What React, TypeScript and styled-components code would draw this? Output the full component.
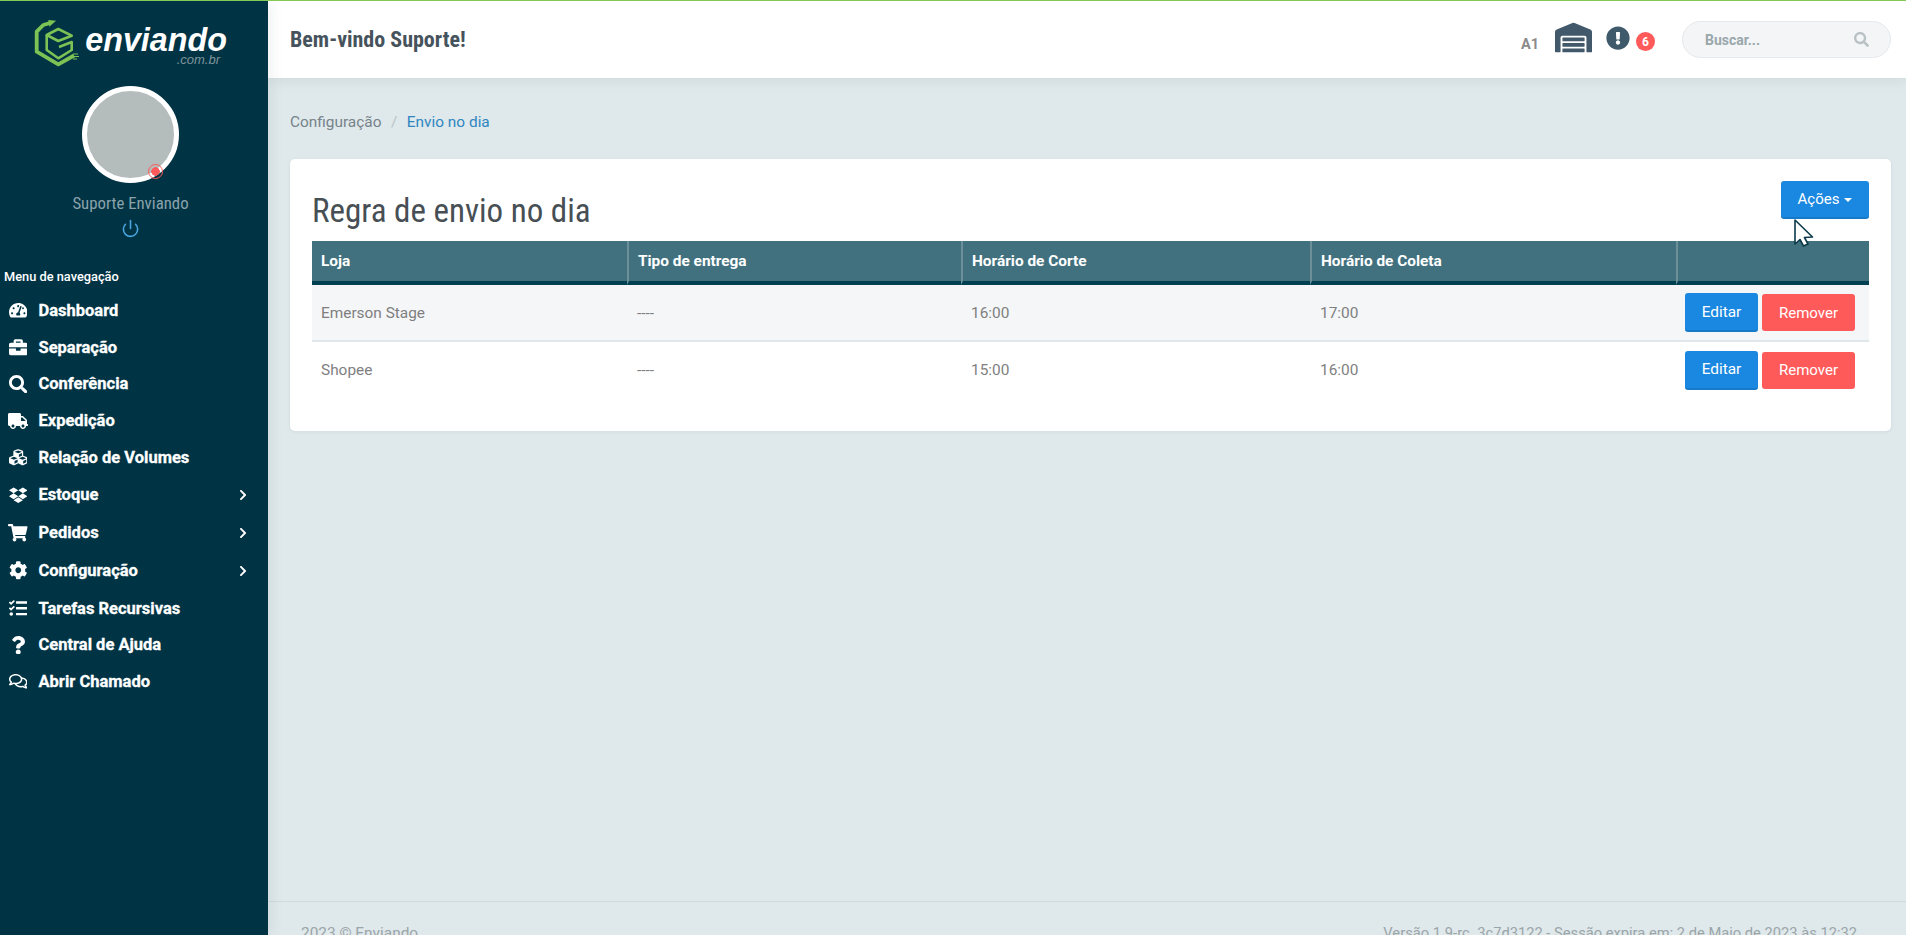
import * as React from "react";
import styled, { createGlobalStyle } from "styled-components";
import {
  FaTachometerAlt,
  FaBriefcase,
  FaSearch,
  FaTruck,
  FaCubes,
  FaDropbox,
  FaShoppingCart,
  FaCog,
  FaTasks,
  FaQuestion,
  FaRegComments,
  FaChevronRight,
  FaWarehouse,
  FaExclamationCircle,
} from "react-icons/fa";
import { Power } from "lucide-react";

const GlobalStyle = createGlobalStyle`
  html, body {
    margin: 0;
    padding: 0;
    height: 100%;
    overflow: hidden;
    background: #dfe8ea;
    font-family: Roboto, "Liberation Sans", sans-serif;
  }
  * { box-sizing: border-box; }
`;

const Page = styled.div`
  display: flex;
  height: 935px;
  overflow: hidden;
  border-top: 1px solid #82c955;
`;

const Sidebar = styled.aside`
  flex: 0 0 268px;
  background: #003445;
  display: flex;
  flex-direction: column;
  box-shadow: 2px 0 14px rgba(0, 50, 66, 0.08);
  z-index: 2;
`;

const LogoRow = styled.div`
  display: flex;
  align-items: flex-start;
  height: 70px;
  padding: 18px 0 0 33px;
  gap: 6px;
`;

const LogoText = styled.div`
  display: flex;
  flex-direction: column;
  align-items: flex-end;
  width: 142px;
`;

const LogoName = styled.span`
  font-family: "Liberation Sans", Arial, sans-serif;
  font-style: italic;
  font-weight: 700;
  font-size: 32.3px;
  line-height: 26px;
  margin-top: 8px;
  color: #fff;
`;

const LogoSuffix = styled.span`
  font-family: "Liberation Sans", Arial, sans-serif;
  font-style: italic;
  font-size: 13px;
  line-height: 13px;
  margin-right: 7px;
  color: #7f939b;
`;

const Profile = styled.div`
  display: flex;
  flex-direction: column;
  align-items: center;
  margin-top: 15px;
  padding-right: 7px;
`;

const Avatar = styled.div`
  position: relative;
  width: 97px;
  height: 97px;
  border-radius: 50%;
  border: 5px solid #fff;
  background: #b4bcbc;
`;

const StatusDot = styled.span`
  position: absolute;
  right: 11px;
  bottom: -1px;
  width: 15px;
  height: 15px;
  border-radius: 50%;
  border: 1px solid #ff5a5a;
  background: radial-gradient(circle, #ff5a5a 4px, transparent 4.5px);
`;

const ProfileName = styled.div`
  margin-top: 10px;
  font-size: 16.8px;
  font-stretch: 75%;
  line-height: 20px;
  color: #8ba2ab;
`;

const PowerButton = styled.div`
  display: flex;
  margin-top: 6px;
  color: #4aa5e0;
`;

const NavTitle = styled.div`
  margin-top: 31px;
  padding-left: 4px;
  font-size: 12.8px;
  font-weight: 500;
  line-height: 16px;
  color: #fff;
`;

const Nav = styled.nav`
  display: flex;
  flex-direction: column;
  margin-top: 7px;
`;

const NavItem = styled.a<{ $sub?: boolean }>`
  display: flex;
  align-items: center;
  height: ${(p) => (p.$sub ? "37.9px" : "36.8px")};
  padding: 0 19px 0 7px;
  color: #fff;
  font-size: 16.5px;
  font-weight: 700;
  -webkit-text-stroke: 0.3px #fff;
`;

const NavIcon = styled.span<{ $size?: number }>`
  flex: 0 0 22px;
  margin-right: 9.5px;
  display: flex;
  align-items: center;
  justify-content: center;
  font-size: ${(p) => p.$size ?? 18.5}px;

  svg {
    flex: none;
    width: auto;
    height: 1em;
  }
`;

const NavLabel = styled.span`
  flex: 1;
`;

const Main = styled.div`
  flex: 1;
  min-width: 0;
  display: flex;
  flex-direction: column;
`;

const Header = styled.header`
  flex: 0 0 77px;
  background: #fff;
  display: flex;
  align-items: center;
  padding: 0 15px 0 22px;
  box-shadow: 0 2px 14px rgba(0, 50, 66, 0.08);
  z-index: 1;
`;

const Greeting = styled.h2`
  flex: 1;
  margin: -1px 0 0;
  font-size: 22px;
  font-weight: 700;
  font-stretch: 75%;
  color: #46535c;
`;

const Tools = styled.div`
  display: flex;
  align-items: center;
`;

const Sector = styled.span`
  font-size: 14.5px;
  font-weight: 700;
  color: #8b8b8b;
  margin-right: 16px;
  margin-top: 9px;
`;

const Warehouse = styled.span`
  display: flex;
  color: #42596b;
  margin-right: 14px;
  margin-top: -4px;
`;

const Alert = styled.span`
  display: flex;
  color: #3f5a6b;
  margin-right: 6px;
  margin-top: -3px;
`;

const Badge = styled.span`
  width: 19px;
  height: 19px;
  border-radius: 50%;
  background: #ff5a5a;
  color: #fff;
  font-size: 12px;
  font-weight: 700;
  display: flex;
  align-items: center;
  justify-content: center;
  margin-right: 27px;
  margin-top: 4px;
`;

const Search = styled.div`
  width: 209px;
  height: 37px;
  border-radius: 19px;
  background: #f3f5f7;
  border: 1px solid #e6e9ec;
  display: flex;
  align-items: center;
  justify-content: space-between;
  padding: 0 21px 0 22px;
  font-size: 14px;
  font-weight: 700;
  color: #9aa7ab;
`;

const SearchIcon = styled.span`
  display: flex;
  color: #b8c2c4;
`;

const Content = styled.main`
  flex: 0 0 823px;
  padding: 0 15px 0 22px;
`;

const Crumbs = styled.div`
  display: flex;
  align-items: center;
  height: 81px;
  padding-top: 7px;
  font-size: 15.4px;
  color: #76838a;
`;

const CrumbSep = styled.span`
  margin: 0 9.5px;
  color: #b9c4c8;
`;

const CrumbActive = styled.span`
  color: #2e86c1;
`;

const Card = styled.section`
  position: relative;
  background: #fff;
  border-radius: 5px;
  padding: 22px 22px 33px;
  box-shadow: 0 1px 4px rgba(0, 50, 66, 0.06);
`;

const CardHead = styled.div`
  display: flex;
  justify-content: space-between;
  height: 60px;
`;

const CardTitle = styled.h1`
  margin: 10px 0 0;
  font-size: 33px;
  font-weight: 400;
  font-stretch: 75%;
  line-height: 40px;
  color: #474f55;
`;

const Button = styled.button<{ $variant: "primary" | "danger" }>`
  border: 0;
  border-radius: 3px;
  font-family: inherit;
  font-size: 15.4px;
  color: #fff;
  background: ${(p) => (p.$variant === "primary" ? "#1a88e0" : "#ff5a5a")};
  border-bottom: ${(p) =>
    p.$variant === "primary" ? "2px solid #167ac9" : "0"};
  height: ${(p) => (p.$variant === "primary" ? "39px" : "37px")};
`;

const ActionsButton = styled(Button)`
  width: 88px;
  height: 38px;
  font-size: 15px;
`;

const Caret = styled.span`
  display: inline-block;
  margin-left: 5px;
  vertical-align: middle;
  border-top: 4px solid #fff;
  border-left: 4px solid transparent;
  border-right: 4px solid transparent;
`;

const Table = styled.table`
  width: 100%;
  table-layout: fixed;
  border-collapse: separate;
  border-spacing: 0;
  font-size: 15.4px;
`;

const Th = styled.th<{ $w?: number }>`
  width: ${(p) => (p.$w ? `${p.$w}px` : "auto")};
  height: 44px;
  padding: 0 9px;
  background: #41717f;
  border-bottom: 4px solid #004050;
  border-left: 2px solid #6d8f9a;
  color: #fff;
  text-align: left;
  font-weight: 700;

  &:first-child {
    border-left: 0;
  }
`;

const Tr = styled.tr<{ $shaded?: boolean }>`
  background: ${(p) => (p.$shaded ? "#f4f6f8" : "#fff")};

  td {
    height: ${(p) => (p.$shaded ? "57px" : "56px")};
    border-bottom: ${(p) => (p.$shaded ? "2px solid #dfe7ea" : "0")};
  }
`;

const Td = styled.td`
  padding: 0 9px 0 10px;
  color: #7f7f7f;

  &:first-child {
    padding-left: 9px;
  }
`;

const ActionCell = styled(Td)`
  padding: 0 14px 0 0;
`;

const ActionGroup = styled.div`
  display: flex;
  justify-content: flex-end;
  align-items: center;
  gap: 4px;
`;

const EditButton = styled(Button)`
  width: 73px;
`;

const RemoveButton = styled(Button)`
  width: 93px;
  font-size: 15px;
`;

const Pointer = styled.svg`
  position: absolute;
  left: 1504px;
  top: 60px;
`;

const Footer = styled.footer`
  flex: 0 0 60px;
  border-top: 1px solid #d1dbde;
  display: flex;
  justify-content: space-between;
  padding: 21px 49px 0 33px;
  font-size: 15.4px;
  line-height: 20px;
  color: #9aa5a9;
`;

const FooterInfo = styled.span`
  font-size: 14.7px;
`;

const items = [
  { label: "Dashboard", icon: <FaTachometerAlt /> },
  { label: "Separação", icon: <FaBriefcase /> },
  { label: "Conferência", icon: <FaSearch /> },
  { label: "Expedição", icon: <FaTruck />, size: 20 },
  { label: "Relação de Volumes", icon: <FaCubes /> },
  { label: "Estoque", icon: <FaDropbox />, sub: true },
  { label: "Pedidos", icon: <FaShoppingCart />, sub: true, size: 19.5 },
  { label: "Configuração", icon: <FaCog />, sub: true },
  { label: "Tarefas Recursivas", icon: <FaTasks /> },
  { label: "Central de Ajuda", icon: <FaQuestion /> },
  { label: "Abrir Chamado", icon: <FaRegComments /> },
];

const rows = [
  { store: "Emerson Stage", cut: "16:00", pickup: "17:00", shaded: true },
  { store: "Shopee", cut: "15:00", pickup: "16:00" },
];

function LogoMark() {
  return (
    <svg width="46" height="48" viewBox="0 0 46 48" fill="none">
      <g stroke="#7cc254" strokeLinejoin="round">
        <path d="M17 4 L10.3 6 L3.7 12.7 V32.7 L25.3 45.3 L41 36.5" strokeWidth="3.8" />
        <path d="M13.7 16 L25.3 10 L38.7 16.7 L25.3 22 Z" strokeWidth="2.6" />
        <path d="M13.7 16 V31 L25.3 39.3 L38.7 31 V23 L26 28" strokeWidth="2.6" />
        <path d="M40 35 h5 M41 37.5 h5 M40 40 h4" strokeWidth="1" />
      </g>
      <path d="M15.3 1 L23 1.7 L16.3 7.7 Z" fill="#7cc254" />
    </svg>
  );
}

export default function App() {
  return (
    <>
      <GlobalStyle />
      <Page>
        <Sidebar>
          <LogoRow>
            <LogoMark />
            <LogoText>
              <LogoName>enviando</LogoName>
              <LogoSuffix>.com.br</LogoSuffix>
            </LogoText>
          </LogoRow>
          <Profile>
            <Avatar>
              <StatusDot />
            </Avatar>
            <ProfileName>Suporte Enviando</ProfileName>
            <PowerButton>
              <Power size={19} />
            </PowerButton>
          </Profile>
          <NavTitle>Menu de navegação</NavTitle>
          <Nav>
            {items.map((item) => (
              <NavItem key={item.label} $sub={item.sub}>
                <NavIcon $size={item.size}>{item.icon}</NavIcon>
                <NavLabel>{item.label}</NavLabel>
                {item.sub && <FaChevronRight size={12} />}
              </NavItem>
            ))}
          </Nav>
        </Sidebar>
        <Main>
          <Header>
            <Greeting>Bem-vindo Suporte!</Greeting>
            <Tools>
              <Sector>A1</Sector>
              <Warehouse>
                <FaWarehouse size={37} />
              </Warehouse>
              <Alert>
                <FaExclamationCircle size={24} />
              </Alert>
              <Badge>6</Badge>
              <Search>
                Buscar...
                <SearchIcon>
                  <FaSearch size={15} />
                </SearchIcon>
              </Search>
            </Tools>
          </Header>
          <Content>
            <Crumbs>
              Configuração
              <CrumbSep>/</CrumbSep>
              <CrumbActive>Envio no dia</CrumbActive>
            </Crumbs>
            <Card>
              <CardHead>
                <CardTitle>Regra de envio no dia</CardTitle>
                <ActionsButton $variant="primary">
                  Ações
                  <Caret />
                </ActionsButton>
              </CardHead>
              <Table>
                <thead>
                  <tr>
                    <Th $w={315}>Loja</Th>
                    <Th $w={334}>Tipo de entrega</Th>
                    <Th $w={349}>Horário de Corte</Th>
                    <Th $w={366}>Horário de Coleta</Th>
                    <Th />
                  </tr>
                </thead>
                <tbody>
                  {rows.map((row) => (
                    <Tr key={row.store} $shaded={row.shaded}>
                      <Td>{row.store}</Td>
                      <Td>----</Td>
                      <Td>{row.cut}</Td>
                      <Td>{row.pickup}</Td>
                      <ActionCell>
                        <ActionGroup>
                          <EditButton $variant="primary">Editar</EditButton>
                          <RemoveButton $variant="danger">Remover</RemoveButton>
                        </ActionGroup>
                      </ActionCell>
                    </Tr>
                  ))}
                </tbody>
              </Table>
              <Pointer width="20" height="28" viewBox="0 0 20 28">
                <path
                  d="M1 1 L1 25 L6 20.5 L9.5 27 L14 25 L10.5 18.5 L18.5 18 Z"
                  fill="#fff"
                  stroke="#0b3a4a"
                  strokeWidth="1.6"
                  strokeLinejoin="round"
                />
              </Pointer>
            </Card>
          </Content>
          <Footer>
            <span>2023 © Enviando</span>
            <FooterInfo>
              Versão 1.9-rc. 3c7d3122 - Sessão expira em: 2 de Maio de 2023 às 12:32
            </FooterInfo>
          </Footer>
        </Main>
      </Page>
    </>
  );
}
